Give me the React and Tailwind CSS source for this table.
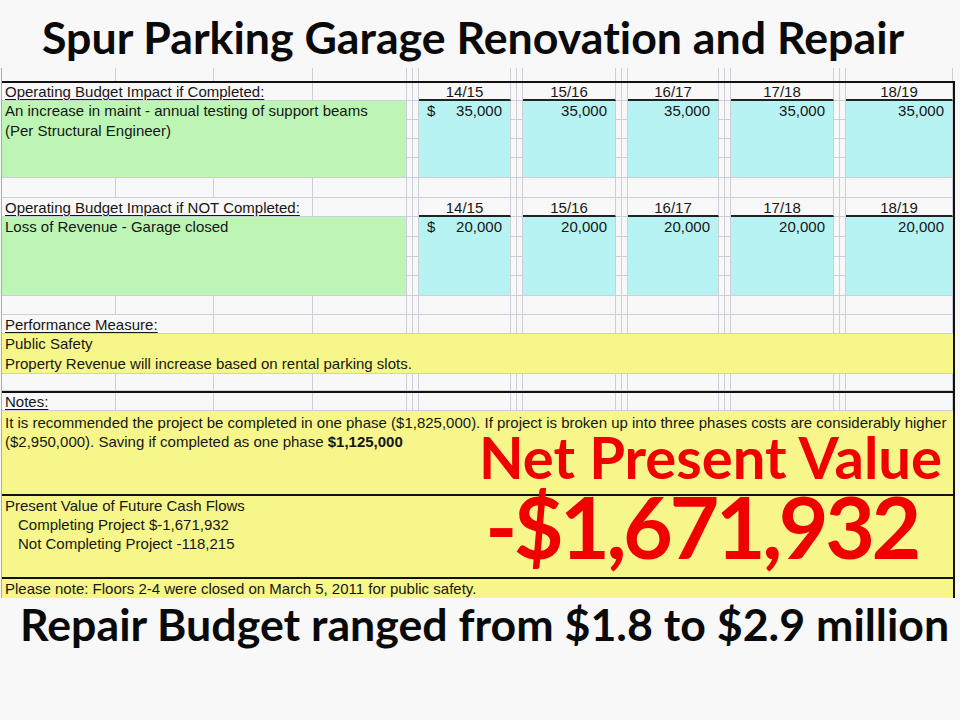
const W = [
  'w-[114px]', 'w-[98px]', 'w-[99px]', 'w-[94px]', 'w-[6px]', 'w-[6px]',
  'w-[92px]', 'w-[6px]', 'w-[6px]', 'w-[93px]', 'w-[6px]', 'w-[6px]',
  'w-[91px]', 'w-[6px]', 'w-[6px]', 'w-[103px]', 'w-[6px]', 'w-[6px]', 'w-[107px]',
];
const YEAR_COLS = [6, 9, 12, 15, 18];
const years = ['14/15', '15/16', '16/17', '17/18', '18/19'];
const grid = 'border-r border-b border-r-[#cdcfd8] border-b-[#cdcfd8]';

function EmptyRow({ h }) {
  return (
    <div className={`flex ${h}`}>
      {W.map((w, i) => (
        <div key={i} className={`shrink-0 ${w} ${grid}`} />
      ))}
    </div>
  );
}

function HeaderRow({ h, label, span, labelW, withYears }) {
  return (
    <div className={`flex ${h}`}>
      <div className={`shrink-0 ${labelW} ${grid} pl-[3px] whitespace-nowrap`}>
        <span className="underline underline-offset-2">{label}</span>
      </div>
      {W.slice(span).map((w, i) => {
        const col = i + span;
        const y = YEAR_COLS.indexOf(col);
        if (withYears && y >= 0) {
          return (
            <div key={col} className={`shrink-0 ${w} border-r border-r-[#cdcfd8] border-b-2 border-b-[#222] text-center`}>
              {years[y]}
            </div>
          );
        }
        return <div key={col} className={`shrink-0 ${w} ${grid}`} />;
      })}
    </div>
  );
}

function Block({ rows, lines, value }) {
  return (
    <div className="flex">
      <div className={`shrink-0 w-[405px] bg-[#bdf5b5] ${grid} pl-[3px] leading-[20px]`}>
        {lines.map((l) => (
          <div key={l}>{l}</div>
        ))}
      </div>
      {W.slice(4).map((w, i) => {
        const col = i + 4;
        const y = YEAR_COLS.indexOf(col);
        if (y >= 0) {
          return (
            <div key={col} className={`shrink-0 ${w} bg-[#b8f3f3] ${grid} flex justify-between pl-2 pr-2 leading-[20px]`}>
              <span>{y === 0 ? '$' : ''}</span>
              <span>{value}</span>
            </div>
          );
        }
        return (
          <div key={col} className={`shrink-0 ${w} flex flex-col`}>
            {rows.map((r, j) => (
              <div key={j} className={`${r} ${grid}`} />
            ))}
          </div>
        );
      })}
    </div>
  );
}

export default function App() {
  return (
    <div className="w-[960px] h-[720px] bg-[#f8f8f8] overflow-hidden text-[#161616]">
      {/* slide title */}
      <div className="h-[68px] pl-[42px] pt-[11px] font-['Lato',sans-serif] font-bold text-[44.7px] leading-[1.2] text-[#0a0a0a] whitespace-nowrap [font-variant-ligatures:none]">
        Spur Parking Garage Renovation and Repair
      </div>

      <div className="ml-px border-l border-l-[#a9abb8] flex h-[13px]">
        {W.map((w, i) => (
          <div key={i} className={`shrink-0 ${w} border-r border-r-[#cdcfd8]`} />
        ))}
      </div>

      {/* spreadsheet */}
      <div className="ml-px w-[954px] border-l border-l-[#a9abb8] border-r-2 border-r-[#111] flex flex-col font-['Liberation_Sans',Arial,sans-serif] text-[15px] leading-[18px]">
        <div className="h-[2px] bg-[#111]" />
        <HeaderRow h="h-[18px]" label="Operating Budget Impact if Completed:" span={3} labelW="w-[311px]" withYears />
        <Block
          rows={['h-[19px]', 'h-[19px]', 'h-[19px]', 'h-[20px]']}
          lines={['An increase in maint - annual testing of support beams', '(Per Structural Engineer)']}
          value="35,000"
        />
        <EmptyRow h="h-[20px]" />
        <div className="leading-[19px]">
          <HeaderRow h="h-[19px]" label="Operating Budget Impact if NOT Completed:" span={3} labelW="w-[311px]" withYears />
        </div>
        <Block
          rows={['h-[20px]', 'h-[20px]', 'h-[19px]', 'h-[20px]']}
          lines={['Loss of Revenue - Garage closed']}
          value="20,000"
        />
        <EmptyRow h="h-[19px]" />
        <div className="leading-[19px]">
          <HeaderRow h="h-[19px]" label="Performance Measure:" span={2} labelW="w-[212px]" />
        </div>
        <div className="h-[40px] bg-[#f6f68a] border-b border-b-[#cdcfd8] pl-[3px] leading-[20px]">
          <div>Public Safety</div>
          <div>Property Revenue will increase based on rental parking slots.</div>
        </div>
        <EmptyRow h="h-[17px]" />
        <div className="h-[2px] bg-[#111]" />
        <HeaderRow h="h-[18px]" label="Notes:" span={1} labelW="w-[114px]" />

        {/* notes */}
        <div className="h-[83px] bg-[#f6f68a] flex flex-col pl-[3px] pt-[2px] leading-[19px]">
          <div className="whitespace-nowrap">
            It is recommended the project be completed in one phase ($1,825,000). If project is broken up into three phases costs are considerably higher
          </div>
          <div className="whitespace-nowrap">
            ($2,950,000). Saving if completed as one phase <span className="font-bold">$1,125,000</span>
          </div>
          <div className="self-end -mt-[17px] pr-[11px] font-['Lato',sans-serif] font-bold text-[58px] leading-[0.8] text-[#f00000] whitespace-nowrap">
            Net Present Value
          </div>
        </div>
        <div className="h-[2px] bg-[#111]" />

        {/* present value */}
        <div className="h-[81px] bg-[#f6f68a] flex leading-[19px]">
          <div className="pl-[3px] whitespace-nowrap">
            <div>Present Value of Future Cash Flows</div>
            <div className="pl-[13px]">Completing Project $-1,671,932</div>
            <div className="pl-[13px]">Not Completing Project -118,215</div>
          </div>
          <div className="ml-auto pr-[35px] -mt-[4px] font-['Lato',sans-serif] font-bold text-[86px] leading-[0.8] tracking-[-3.5px] text-[#f00000] whitespace-nowrap">
            -$1,671,932
          </div>
        </div>
        <div className="h-[2px] bg-[#111]" />
        <div className="h-[19px] bg-[#f6f68a] pl-[3px] leading-[19px] whitespace-nowrap">
          Please note: Floors 2-4 were closed on March 5, 2011 for public safety.
        </div>
      </div>

      {/* slide footer */}
      <div className="pl-[20px] font-['Lato',sans-serif] font-bold text-[44.7px] leading-[1.2] text-[#0a0a0a] whitespace-nowrap">
        Repair Budget ranged from $1.8 to $2.9 million
      </div>
    </div>
  );
}
